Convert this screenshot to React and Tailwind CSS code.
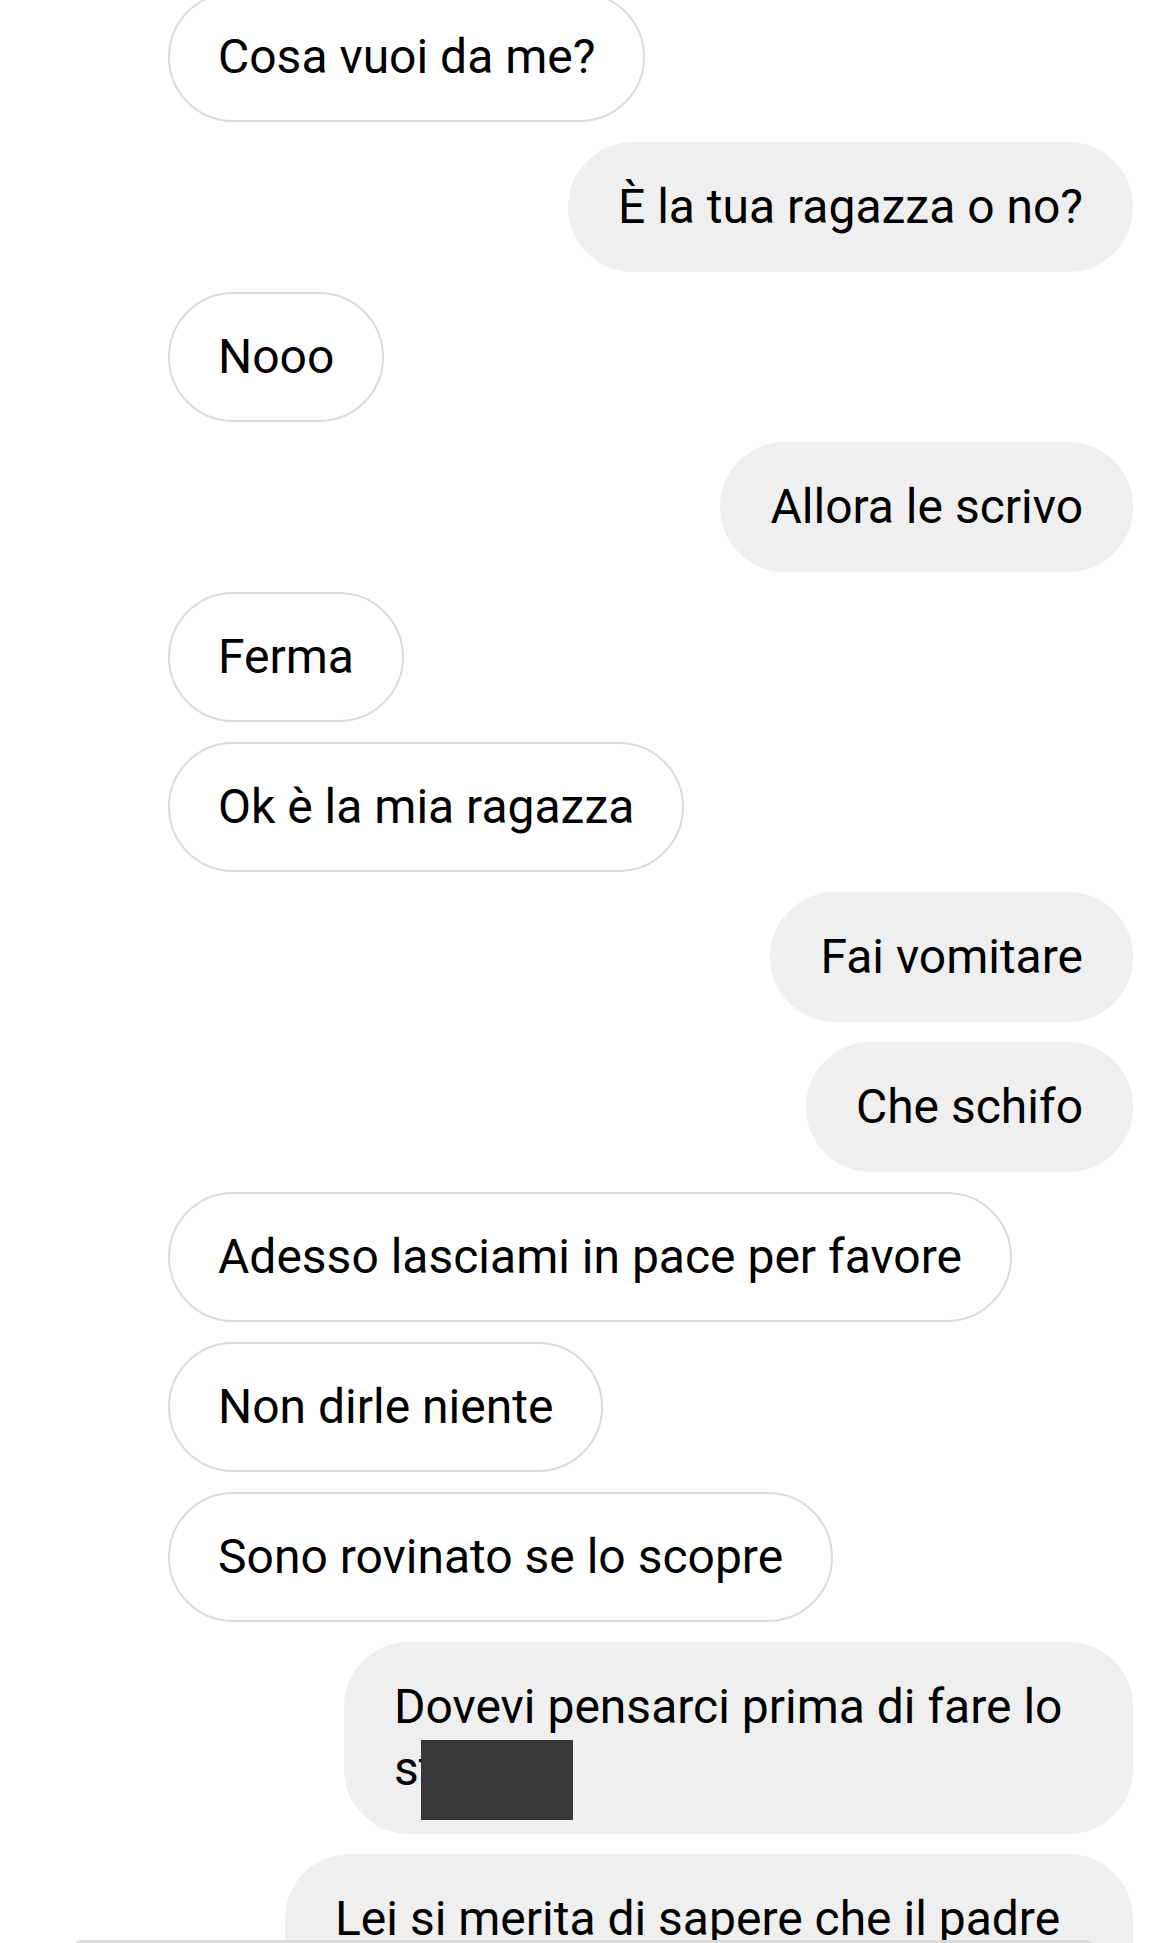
import React from 'react'

const messages = [
  { from: 'them', text: 'Cosa vuoi da me?' },
  { from: 'me', text: 'È la tua ragazza o no?' },
  { from: 'them', text: 'Nooo' },
  { from: 'me', text: 'Allora le scrivo' },
  { from: 'them', text: 'Ferma' },
  { from: 'them', text: 'Ok è la mia ragazza' },
  { from: 'me', text: 'Fai vomitare' },
  { from: 'me', text: 'Che schifo' },
  { from: 'them', text: 'Adesso lasciami in pace per favore' },
  { from: 'them', text: 'Non dirle niente' },
  { from: 'them', text: 'Sono rovinato se lo scopre' },
]

function Bubble({ from, children, className = '' }) {
  const look =
    from === 'me'
      ? 'bg-[#efefef] border-2 border-[#efefef]'
      : 'bg-white border-2 border-[#dbdbdb]'
  return (
    <div className={`flex ${from === 'me' ? 'justify-end' : 'justify-start'}`}>
      <div className={`relative rounded-[65px] px-[48px] py-[32px] leading-[62px] text-black ${look} ${className}`}>
        {children}
      </div>
    </div>
  )
}

export default function App() {
  return (
    <div
      className="relative h-[1943px] w-[1168px] overflow-hidden bg-white text-[48px]"
      style={{ fontFamily: 'Roboto, "Liberation Sans", sans-serif' }}
    >
      <div className="-mt-[8px] flex flex-col gap-[20px] pl-[168px] pr-[35px]">
        {messages.map((m, i) => (
          <Bubble key={i} from={m.from}>{m.text}</Bubble>
        ))}

        {/* multi-line with redacted word */}
        <Bubble from="me" className="w-[789px]">
          Dovevi pensarci prima di fare lo
          <br />
          st
          <span className="absolute left-[75px] top-[96px] h-[80px] w-[152px] bg-[#38383a]" />
        </Bubble>

        <div className="-ml-[133px]">
          <Bubble from="me" className="w-[848px] pb-[120px]">
            Lei si merita di sapere che il padre
          </Bubble>
        </div>
      </div>

      {/* top edge of the input bar peeking in at the bottom */}
      <div className="absolute left-[74px] top-[1940px] h-[12px] w-[1020px] rounded-t-[8px] bg-[#dadada]" />
    </div>
  )
}
